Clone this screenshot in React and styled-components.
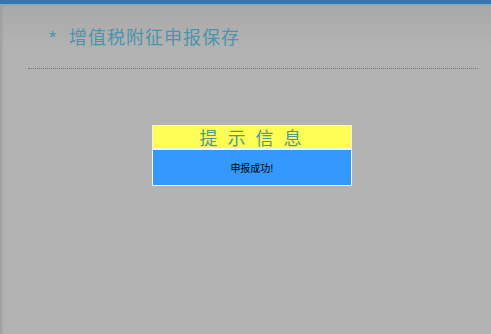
import styled, { createGlobalStyle } from "styled-components";

const GlobalStyle = createGlobalStyle`
  html, body {
    margin: 0;
    padding: 0;
    background: #b3b3b3;
    font-family: "Liberation Serif", "Noto Sans CJK SC", serif;
  }
`;

export default function App() {
  return (
    <>
      <GlobalStyle />
      <Page>
        <TopBar />
        <Content>
          <Title>
            <Star>*</Star>增值税附征申报保存
          </Title>
          <Divider />
          <Dialog>
            <DialogHead>提 示 信 息</DialogHead>
            <DialogBody>申报成功!</DialogBody>
          </Dialog>
        </Content>
      </Page>
    </>
  );
}

const Page = styled.main`
  width: 491px;
  height: 334px;
  display: flex;
  flex-direction: column;
  overflow: hidden;
  background: #b3b3b3;
`;

const TopBar = styled.div`
  height: 4px;
  background: #3376b1;
  border-bottom: 2px solid #93a6b8;
`;

const Content = styled.section`
  flex: 1;
  display: flex;
  flex-direction: column;
  background: linear-gradient(#a9a9a9 0, #b3b3b3 45px);
  box-shadow: inset 4px 0 3px -2px #9e9e9e;
  padding: 0 13px 0 28px;
`;

const Title = styled.h1`
  margin: 19px 0 0 21px;
  font-weight: normal;
  font-size: 18px;
  line-height: 22px;
  color: #4b94ad;
  font-family: "Noto Sans CJK SC", sans-serif;
  letter-spacing: 1px;
`;

const Star = styled.span`
  font-family: "Liberation Sans", sans-serif;
  margin-right: 12px;
`;

const Divider = styled.hr`
  margin: 19px 0 0;
  border: none;
  border-top: 1px dotted #777;
  height: 0;
`;

const Dialog = styled.div`
  align-self: flex-start;
  margin: 56px 0 0 124px;
  width: 198px;
  border: 1px solid #f2f2f2;
  display: flex;
  flex-direction: column;
`;

const DialogHead = styled.div`
  height: 22px;
  background: #ffff55;
  border-bottom: 2px solid #f4f4f4;
  color: #4e9a8e;
  font-size: 18px;
  line-height: 22px;
  text-align: center;
  letter-spacing: 3px;
  font-family: "Noto Sans CJK SC", sans-serif;
`;

const DialogBody = styled.div`
  height: 35px;
  background: #3399ff;
  color: #000;
  font-size: 10px;
  line-height: 35px;
  text-align: center;
  font-family: "Noto Sans CJK SC", sans-serif;
`;
